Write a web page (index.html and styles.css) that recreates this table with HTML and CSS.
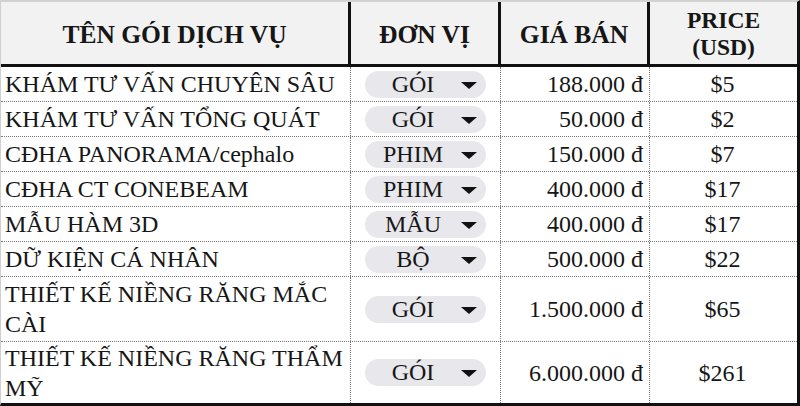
FILE: index.html
```html
<!DOCTYPE html>
<html lang="vi">
<head>
<meta charset="utf-8">
<title>Bảng giá</title>
<link rel="stylesheet" href="styles.css">
</head>
<body>
<div class="sheet">
  <div class="row head">
    <div class="cell h">TÊN GÓI DỊCH VỤ</div>
    <div class="cell h">ĐƠN VỊ</div>
    <div class="cell h">GIÁ BÁN</div>
    <div class="cell h usd-head">PRICE<br>(USD)</div>
  </div>
  <div class="row">
    <div class="cell name">KHÁM TƯ VẤN CHUYÊN SÂU</div>
    <div class="cell unit"><span class="chip"><span class="chip-text">GÓI</span><span class="caret"></span></span></div>
    <div class="cell price">188.000 đ</div>
    <div class="cell usd">$5</div>
  </div>
  <div class="row">
    <div class="cell name">KHÁM TƯ VẤN TỔNG QUÁT</div>
    <div class="cell unit"><span class="chip"><span class="chip-text">GÓI</span><span class="caret"></span></span></div>
    <div class="cell price">50.000 đ</div>
    <div class="cell usd">$2</div>
  </div>
  <div class="row">
    <div class="cell name">CĐHA PANORAMA/cephalo</div>
    <div class="cell unit"><span class="chip"><span class="chip-text">PHIM</span><span class="caret"></span></span></div>
    <div class="cell price">150.000 đ</div>
    <div class="cell usd">$7</div>
  </div>
  <div class="row">
    <div class="cell name">CĐHA CT CONEBEAM</div>
    <div class="cell unit"><span class="chip"><span class="chip-text">PHIM</span><span class="caret"></span></span></div>
    <div class="cell price">400.000 đ</div>
    <div class="cell usd">$17</div>
  </div>
  <div class="row">
    <div class="cell name">MẪU HÀM 3D</div>
    <div class="cell unit"><span class="chip"><span class="chip-text">MẪU</span><span class="caret"></span></span></div>
    <div class="cell price">400.000 đ</div>
    <div class="cell usd">$17</div>
  </div>
  <div class="row">
    <div class="cell name">DỮ KIỆN CÁ NHÂN</div>
    <div class="cell unit"><span class="chip"><span class="chip-text">BỘ</span><span class="caret"></span></span></div>
    <div class="cell price">500.000 đ</div>
    <div class="cell usd">$22</div>
  </div>
  <div class="row tall">
    <div class="cell name">THIẾT KẾ NIỀNG RĂNG MẮC CÀI</div>
    <div class="cell unit"><span class="chip"><span class="chip-text">GÓI</span><span class="caret"></span></span></div>
    <div class="cell price">1.500.000 đ</div>
    <div class="cell usd">$65</div>
  </div>
  <div class="row tall last">
    <div class="cell name">THIẾT KẾ NIỀNG RĂNG THẨM MỸ</div>
    <div class="cell unit"><span class="chip"><span class="chip-text">GÓI</span><span class="caret"></span></span></div>
    <div class="cell price">6.000.000 đ</div>
    <div class="cell usd">$261</div>
  </div>
</div>
</body>
</html>
```

FILE: styles.css
```css
html, body {
  margin: 0;
  padding: 0;
  background: #ffffff;
}

.sheet {
  box-sizing: border-box;
  width: 800px;
  height: 406px;
  border-top: 2px solid #d2d2d2;
  border-left: 1px solid #cfcfcf;
  border-right: 3px solid #111111;
  border-bottom: 3px solid #111111;
  display: flex;
  flex-direction: column;
  font-family: "Liberation Serif", Tinos, "Times New Roman", Times, serif;
  color: #161616;
  font-size: 24px;
  line-height: 30px;
}

.row {
  display: grid;
  grid-template-columns: 350px 150px 149px 1fr;
  height: 35px;
  box-sizing: border-box;
  border-bottom: 1px dotted #7a7a7a;
}

.row.tall {
  height: 65px;
}

.row.last {
  flex: 1;
  height: auto;
  border-bottom: none;
}

.row.head {
  height: 65px;
  background: #f2f2f2;
  border-bottom: 3px solid #111111;
}

.cell {
  box-sizing: border-box;
  border-right: 1px dotted #7a7a7a;
  display: flex;
  align-items: center;
  min-width: 0;
}

.cell:last-child {
  border-right: none;
}

.cell.h {
  border-right: 3px solid #111111;
  justify-content: center;
  text-align: center;
  font-weight: bold;
  font-size: 25.5px;
  line-height: 27px;
  padding-top: 3px;
}

.cell.h.usd-head {
  font-size: 23.5px;
  padding-top: 2px;
}

.cell.h:last-child {
  border-right: none;
}

.cell.name {
  padding-left: 4px;
  padding-right: 6px;
}

.cell.unit {
  justify-content: center;
}

.chip {
  display: flex;
  align-items: center;
  width: 121px;
  height: 27px;
  border-radius: 14px;
  background: #e8e8ec;
  box-sizing: border-box;
  padding-right: 9px;
}

.chip-text {
  flex: 1;
  text-align: center;
  line-height: 27px;
}

.caret {
  width: 0;
  height: 0;
  border-left: 8px solid transparent;
  border-right: 8px solid transparent;
  border-top: 7px solid #111111;
  margin-top: 2px;
}

.cell.price {
  justify-content: flex-end;
  padding-right: 6px;
}

.cell.usd {
  justify-content: center;
  padding-right: 2px;
}
```
